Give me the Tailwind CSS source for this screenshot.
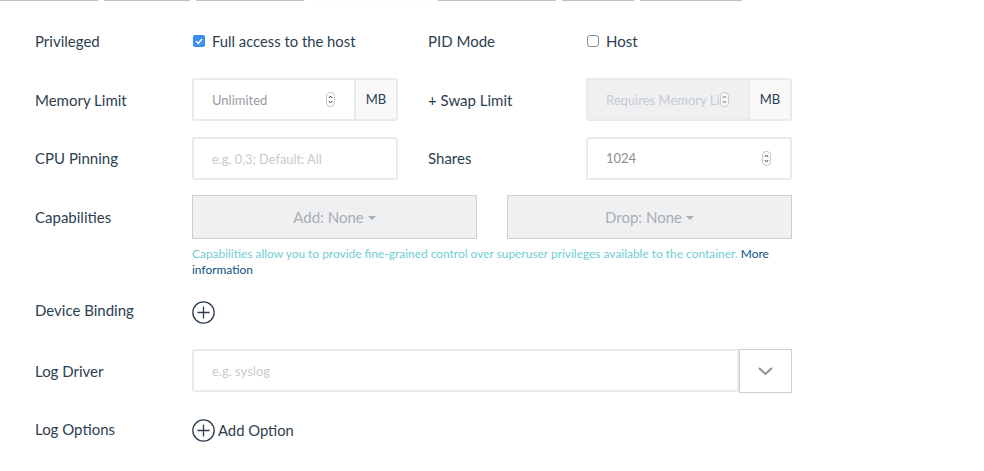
<!DOCTYPE html>
<html lang="en">
  <head>
    <meta charset="UTF-8" />
    <title>Container Settings</title>
    <script src="https://cdn.jsdelivr.net/npm/@tailwindcss/browser@4"></script>
  </head>
  <body class="bg-white font-['Lato',sans-serif] text-[15px] text-[#2c3e50] h-[471px] overflow-hidden">
    <!-- Tabs strip -->
    <div class="flex h-px">
      <div class="w-[98px] bg-[#bdc3c7]"></div>
      <div class="w-[86px] ml-[6px] bg-[#bdc3c7]"></div>
      <div class="w-[108px] ml-[6px] bg-[#bdc3c7]"></div>
      <div class="w-[122px] ml-[6px] bg-[#fafafa]"></div>
      <div class="w-[118px] ml-[6px] bg-[#bdc3c7]"></div>
      <div class="w-[72px] ml-[6px] bg-[#bdc3c7]"></div>
      <div class="w-[102px] ml-[6px] bg-[#bdc3c7]"></div>
    </div>

    <div class="pl-[35px] w-[792px]">
      <!-- Privileged / PID -->
      <div class="flex items-center h-[24px] mt-[28px]">
        <div class="w-[157px]">Privileged</div>
        <div class="w-[236px] flex items-center">
          <svg class="w-[12px] h-[12px] ml-px mr-[7px]" viewBox="0 0 12 12">
            <rect width="12" height="12" rx="2" fill="#3b8ff3" />
            <path d="M3 6.200 5.200 8.400 9 3.900" fill="none" stroke="#fff" stroke-width="1.600" />
          </svg>
          <span class="text-[14.8px]">Full access to the host</span>
        </div>
        <div class="w-[158px]">PID Mode</div>
        <div class="flex items-center">
          <span class="w-[12px] h-[12px] ml-px mr-[7px] rounded-[3px] border border-[#8e8e8e] bg-white"></span>
          <span>Host</span>
        </div>
      </div>

      <!-- Memory / Swap -->
      <div class="flex items-center mt-[25px]">
        <div class="w-[157px] pt-[2px]">Memory Limit</div>
        <div class="w-[206px] h-[43px] flex">
          <div class="flex-1 min-w-0 flex items-center pl-[18px] pr-[19px] border-2 border-r-0 border-[#e8ebec] rounded-l-[3px]">
            <input class="min-w-0 flex-1 pt-[2px] text-[13px] outline-none placeholder:text-[#9a9ba3]" placeholder="Unlimited" />
            <svg class="w-[9px] h-[15px] shrink-0" viewBox="0 0 9 15">
              <rect x=".5" y=".5" width="8" height="14" rx="3.5" fill="#fff" stroke="#c9c9c9" />
              <path d="M2.800 6 4.500 4 6.200 6M2.800 9 4.500 11 6.200 9" fill="none" stroke="#444" />
            </svg>
          </div>
          <div class="w-[44px] shrink-0 flex items-center justify-center bg-[#f9f9f9] border-2 border-[#e8ebec] rounded-r-[3px] text-[13px]">MB</div>
        </div>
        <div class="w-[158px] ml-[30px] pt-[2px]">+ Swap Limit</div>
        <div class="w-[206px] h-[43px] flex">
          <div class="flex-1 min-w-0 flex items-center pl-[18px] pr-[19px] bg-[#eff0f2] border-2 border-r-0 border-[#e8ebec] rounded-l-[3px]">
            <input disabled class="min-w-0 flex-1 pt-[2px] bg-transparent text-[13px] outline-none placeholder:text-[#c6cbd1]" placeholder="Requires Memory Limit" />
            <svg class="w-[9px] h-[15px] shrink-0" viewBox="0 0 9 15">
              <rect x=".5" y=".5" width="8" height="14" rx="3.5" fill="#f7f7f7" stroke="#c9c9c9" />
              <path d="M2.800 6 4.500 4 6.200 6M2.800 9 4.500 11 6.200 9" fill="none" stroke="#777" />
            </svg>
          </div>
          <div class="w-[44px] shrink-0 flex items-center justify-center bg-[#f9f9f9] border-2 border-[#e8ebec] rounded-r-[3px] text-[13px]">MB</div>
        </div>
      </div>

      <!-- CPU / Shares -->
      <div class="flex items-center mt-[16px]">
        <div class="w-[157px]">CPU Pinning</div>
        <input class="w-[206px] h-[43px] pl-[18px] border-2 border-[#e8ebec] rounded-[3px] text-[12.8px] outline-none placeholder:text-[#c9cacf]" placeholder="e.g. 0,3; Default: All" />
        <div class="w-[158px] ml-[30px]">Shares</div>
        <div class="w-[206px] h-[43px] flex items-center pl-[18px] pr-[19px] border-2 border-[#e8ebec] rounded-[3px]">
          <input class="min-w-0 flex-1 text-[13px] text-[#8d8e94] outline-none" value="1024" />
          <svg class="w-[9px] h-[15px] shrink-0" viewBox="0 0 9 15">
            <rect x=".5" y=".5" width="8" height="14" rx="3.5" fill="#fff" stroke="#c9c9c9" />
            <path d="M2.800 6 4.500 4 6.200 6M2.800 9 4.500 11 6.200 9" fill="none" stroke="#444" />
          </svg>
        </div>
      </div>

      <!-- Capabilities -->
      <div class="flex items-center mt-[15px]">
        <div class="w-[157px]">Capabilities</div>
        <button class="w-[285px] h-[44px] flex items-center justify-center bg-[#eff0f2] border border-[#ccd0d2] text-[#a9aeb2]">
          Add: None<span class="ml-[4px] mt-[2px] border-x-[4px] border-x-transparent border-t-[4px] border-t-[#a9aeb2]"></span>
        </button>
        <button class="w-[285px] h-[44px] ml-[30px] flex items-center justify-center bg-[#eff0f2] border border-[#ccd0d2] text-[#a9aeb2]">
          Drop: None<span class="ml-[4px] mt-[2px] border-x-[4px] border-x-transparent border-t-[4px] border-t-[#a9aeb2]"></span>
        </button>
      </div>
      <p class="ml-[157px] mt-[7px] text-[11.93px] leading-[16px] text-[#6fcdd3]">
        Capabilities allow you to provide fine-grained control over superuser privileges available to the container.
        <a class="text-[#0b4f82]">More information</a>
      </p>

      <!-- Device Binding -->
      <div class="flex items-center mt-[23px]">
        <div class="w-[157px] -mt-[4px]">Device Binding</div>
        <svg class="w-[23px] h-[23px]" viewBox="0 0 23 23">
          <circle cx="11.5" cy="11.5" r="10.700" fill="none" stroke="#2c3e50" stroke-width="1.300" />
          <path d="M5.500 11.500h12M11.500 5.500v12" stroke="#2c3e50" stroke-width="1.300" />
        </svg>
      </div>

      <!-- Log Driver -->
      <div class="flex items-center mt-[25px]">
        <div class="w-[157px]">Log Driver</div>
        <input class="self-start w-[547px] h-[43px] pl-[18px] pt-px border-2 border-[#e8ebec] rounded-l-[3px] text-[13px] outline-none placeholder:text-[#c9cacf]" placeholder="e.g. syslog" />
        <div class="w-[53px] h-[44px] flex items-center justify-center border border-[#ccd0d2]">
          <svg class="w-[15px] h-[9px]" viewBox="0 0 15 9">
            <path d="M1 1 7.500 7 14 1" fill="none" stroke="#8a9296" stroke-width="2" />
          </svg>
        </div>
      </div>

      <!-- Log Options -->
      <div class="flex items-center mt-[26px]">
        <div class="w-[157px] -mt-[3px]">Log Options</div>
        <svg class="w-[23px] h-[23px]" viewBox="0 0 23 23">
          <circle cx="11.5" cy="11.5" r="10.700" fill="none" stroke="#2c3e50" stroke-width="1.300" />
          <path d="M5.500 11.500h12M11.500 5.500v12" stroke="#2c3e50" stroke-width="1.300" />
        </svg>
        <span class="ml-[3px] text-[14.8px]">Add Option</span>
      </div>
    </div>
  </body>
</html>
